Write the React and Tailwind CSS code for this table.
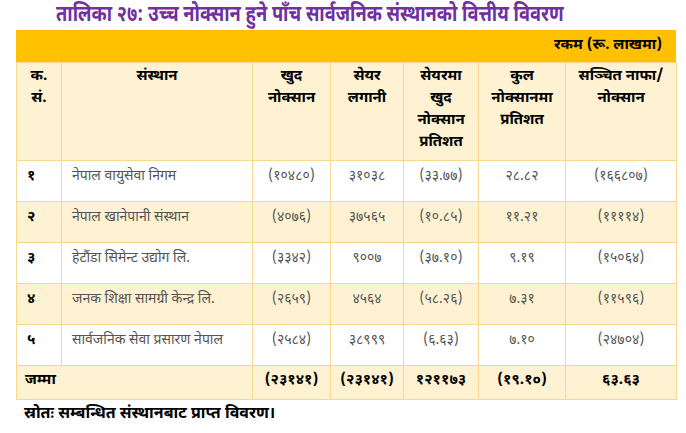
const FONT = { fontFamily: '"Noto Sans Devanagari", "Lohit Devanagari", "Mukta", "Noto Sans", sans-serif' };

const ROWS = [
  ['१', 'नेपाल वायुसेवा निगम', '(१०४८०)', '३१०३८', '(३३.७७)', '२८.८२', '(१६६८०७)'],
  ['२', 'नेपाल खानेपानी संस्थान', '(४०७६)', '३७५६५', '(१०.८५)', '११.२१', '(११११४)'],
  ['३', 'हेटौंडा सिमेन्ट उद्योग लि.', '(३३४२)', '९००७', '(३७.१०)', '९.१९', '(१५०६४)'],
  ['४', 'जनक शिक्षा सामग्री केन्द्र लि.', '(२६५९)', '४५६४', '(५८.२६)', '७.३१', '(११५९६)'],
  ['५', 'सार्वजनिक सेवा प्रसारण नेपाल', '(२५८४)', '३८९९९', '(६.६३)', '७.१०', '(२४७०४)'],
];

const HEADS = [
  ['क.', 'सं.'],
  ['संस्थान'],
  ['खुद', 'नोक्सान'],
  ['सेयर', 'लगानी'],
  ['सेयरमा', 'खुद', 'नोक्सान', 'प्रतिशत'],
  ['कुल', 'नोक्सानमा', 'प्रतिशत'],
  ['सञ्चित नाफा/', 'नोक्सान'],
];

const WIDTHS = ['w-[45px]', 'w-[191px]', 'w-[78px]', 'w-[73px]', 'w-[75px]', 'w-[87px]', 'w-[111px]'];

export default function App() {
  return (
    <div className="w-[686px] h-[433px] bg-white overflow-hidden" style={FONT}>
      <div className="pl-[56px] pt-[2px] h-[30px]">
        <h1 className="inline-block origin-left scale-x-[0.83] whitespace-nowrap text-[22px] leading-[28px] font-bold text-[#7030a0]">
          तालिका २७: उच्च नोक्सान हुने पाँच सार्वजनिक संस्थानको वित्तीय विवरण
        </h1>
      </div>
      <div className="ml-[16px] w-[660px]">
        <div className="h-[32px] bg-[#ffc000] flex items-center justify-end pr-[14px] text-[15px] font-bold text-black">
          रकम (रू. लाखमा)
        </div>
        <table className="w-[660px] table-fixed border-collapse">
          <thead>
            <tr className="h-[98px] bg-[#fef2d2]">
              {HEADS.map((lines, i) => (
                <th key={i} className={`${WIDTHS[i]} align-top pt-[3px] border border-[#f6d88e] text-[15px] leading-[22px] font-bold text-black`}>
                  {lines.map(l => <div key={l}>{l}</div>)}
                </th>
              ))}
            </tr>
          </thead>
          <tbody>
            {ROWS.map((r, ri) => (
              <tr key={r[0]} className={`h-[41px] ${ri % 2 ? 'bg-[#fef2d2]' : 'bg-white'}`}>
                <td className="align-top pt-[5px] pl-[10px] border border-[#f6d88e] text-[15px] font-bold text-black">{r[0]}</td>
                <td className="align-top pt-[5px] pl-[10px] border border-[#f6d88e] text-[14px] text-[#555]">{r[1]}</td>
                {r.slice(2).map((v, ci) => (
                  <td key={ci} className="align-top pt-[5px] text-center border border-[#f6d88e] text-[14px] text-[#555]">{v}</td>
                ))}
              </tr>
            ))}
            <tr className="h-[34px] bg-[#fef2d2] text-[15px] font-bold text-black">
              <td colSpan={2} className="align-top pt-[4px] pl-[8px] border border-[#f6d88e]">जम्मा</td>
              {['(२३१४१)', '(२३१४१)', '१२११७३', '(१९.१०)', '६३.६३'].map((v, i) => (
                <td key={i} className="align-top pt-[4px] text-center border border-[#f6d88e]">{v}</td>
              ))}
            </tr>
          </tbody>
        </table>
      </div>
      <p className="pl-[24px] pt-[3px] text-[16px] font-bold text-black">स्रोतः सम्बन्धित संस्थानबाट प्राप्त विवरण।</p>
    </div>
  );
}
